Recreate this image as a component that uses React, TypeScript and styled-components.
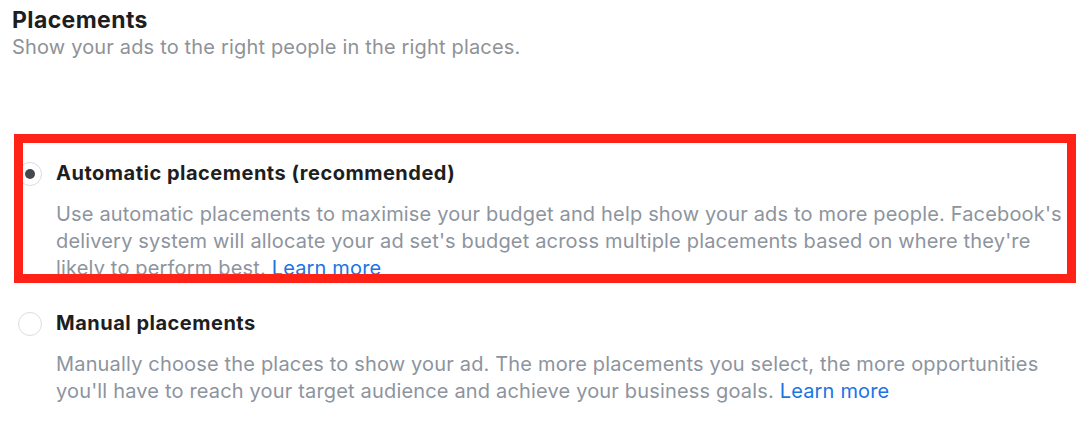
import React from "react";
import styled, { createGlobalStyle } from "styled-components";

const GlobalStyle = createGlobalStyle`
  html, body {
    margin: 0;
    padding: 0;
    background: #ffffff;
  }
  body {
    font-family: Inter, "Noto Sans", "Liberation Sans", sans-serif;
    -webkit-font-smoothing: antialiased;
  }
`;

const Page = styled.div`
  position: relative;
  width: 1092px;
  height: 436px;
  box-sizing: border-box;
  padding: 6px 12px 0 12px;
  overflow: hidden;
`;

const Title = styled.h2`
  margin: 0;
  font-size: 23px;
  line-height: 28px;
  font-weight: 700;
  color: #1c1e21;
  letter-spacing: 0.4px;
`;

const Subtitle = styled.p`
  margin: 0;
  font-size: 20px;
  line-height: 26px;
  color: #8f9296;
  letter-spacing: 0.17px;
`;

const OptionList = styled.div`
  display: flex;
  flex-direction: column;
  gap: 28.5px;
  margin-top: 100.7px;
  padding-left: 6px;
`;

const Option = styled.div`
  display: grid;
  grid-template-columns: 24px 1fr;
  column-gap: 14px;
  align-items: start;
`;

const Radio = styled.span<{ $checked?: boolean }>`
  display: flex;
  align-items: center;
  justify-content: center;
  box-sizing: border-box;
  width: 24px;
  height: 24px;
  margin-top: 1px;
  border-radius: 50%;
  border: 1.5px solid #dadde1;
  background: #ffffff;

  &::after {
    content: "";
    display: ${(p) => (p.$checked ? "block" : "none")};
    width: 10px;
    height: 10px;
    border-radius: 50%;
    background: #444950;
  }
`;

const OptionBody = styled.div`
  display: flex;
  flex-direction: column;
`;

const OptionTitle = styled.div`
  font-size: 20px;
  line-height: 24px;
  font-weight: 700;
  color: #1c1e21;
  letter-spacing: 0.5px;
`;

const OptionDesc = styled.p`
  margin: 16.5px 0 0 0;
  max-width: 1015px;
  font-size: 20px;
  line-height: 27px;
  color: #8d949e;
  letter-spacing: 0.17px;
`;

const Link = styled.a`
  color: #1b74e4;
  text-decoration: none;
  cursor: pointer;
`;

const Highlight = styled.div`
  position: absolute;
  left: 14px;
  top: 134px;
  width: 1062px;
  height: 149px;
  box-sizing: border-box;
  border: 9px solid #ff2216;
  pointer-events: none;
`;

export default function App() {
  return (
    <>
      <GlobalStyle />
      <Page>
        <Title>Placements</Title>
        <Subtitle>Show your ads to the right people in the right places.</Subtitle>
        <OptionList>
          <Option>
            <Radio $checked />
            <OptionBody>
              <OptionTitle>Automatic placements (recommended)</OptionTitle>
              <OptionDesc>
                Use automatic placements to maximise your budget and help show
                your ads to more people. Facebook's delivery system will
                allocate your ad set's budget across multiple placements based
                on where they're likely to perform best. <Link>Learn more</Link>
              </OptionDesc>
            </OptionBody>
          </Option>
          <Option>
            <Radio />
            <OptionBody>
              <OptionTitle>Manual placements</OptionTitle>
              <OptionDesc>
                Manually choose the places to show your ad. The more placements
                you select, the more opportunities you'll have to reach your
                target audience and achieve your business goals.{" "}
                <Link>Learn more</Link>
              </OptionDesc>
            </OptionBody>
          </Option>
        </OptionList>
        <Highlight />
      </Page>
    </>
  );
}
